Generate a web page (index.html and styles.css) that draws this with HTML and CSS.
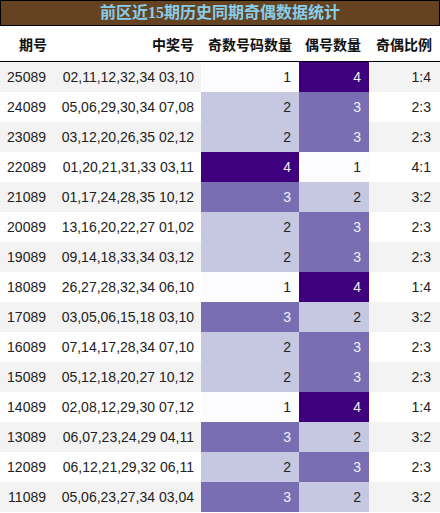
FILE: index.html
```html
<!DOCTYPE html>
<html>
<head>
<meta charset="utf-8">
<link rel="stylesheet" href="styles.css">
</head>
<body>
<div class="title">前区近15期历史同期奇偶数据统计</div>
<table class="stats">
  <colgroup>
    <col class="w0"><col class="w1"><col class="w2"><col class="w3"><col class="w4">
  </colgroup>
  <thead>
    <tr>
      <th class="c0">期号</th>
      <th class="c1">中奖号</th>
      <th class="c2">奇数号码数量</th>
      <th class="c3">偶号数量</th>
      <th class="c4">奇偶比例</th>
    </tr>
  </thead>
  <tbody>
    <tr><td class="c0">25089</td><td class="c1">02,11,12,32,34 03,10</td><td class="c2 v1">1</td><td class="c3 v4">4</td><td class="c4">1:4</td></tr>
    <tr><td class="c0">24089</td><td class="c1">05,06,29,30,34 07,08</td><td class="c2 v2">2</td><td class="c3 v3">3</td><td class="c4">2:3</td></tr>
    <tr><td class="c0">23089</td><td class="c1">03,12,20,26,35 02,12</td><td class="c2 v2">2</td><td class="c3 v3">3</td><td class="c4">2:3</td></tr>
    <tr><td class="c0">22089</td><td class="c1">01,20,21,31,33 03,11</td><td class="c2 v4">4</td><td class="c3 v1">1</td><td class="c4">4:1</td></tr>
    <tr><td class="c0">21089</td><td class="c1">01,17,24,28,35 10,12</td><td class="c2 v3">3</td><td class="c3 v2">2</td><td class="c4">3:2</td></tr>
    <tr><td class="c0">20089</td><td class="c1">13,16,20,22,27 01,02</td><td class="c2 v2">2</td><td class="c3 v3">3</td><td class="c4">2:3</td></tr>
    <tr><td class="c0">19089</td><td class="c1">09,14,18,33,34 03,12</td><td class="c2 v2">2</td><td class="c3 v3">3</td><td class="c4">2:3</td></tr>
    <tr><td class="c0">18089</td><td class="c1">26,27,28,32,34 06,10</td><td class="c2 v1">1</td><td class="c3 v4">4</td><td class="c4">1:4</td></tr>
    <tr><td class="c0">17089</td><td class="c1">03,05,06,15,18 03,10</td><td class="c2 v3">3</td><td class="c3 v2">2</td><td class="c4">3:2</td></tr>
    <tr><td class="c0">16089</td><td class="c1">07,14,17,28,34 07,10</td><td class="c2 v2">2</td><td class="c3 v3">3</td><td class="c4">2:3</td></tr>
    <tr><td class="c0">15089</td><td class="c1">05,12,18,20,27 10,12</td><td class="c2 v2">2</td><td class="c3 v3">3</td><td class="c4">2:3</td></tr>
    <tr><td class="c0">14089</td><td class="c1">02,08,12,29,30 07,12</td><td class="c2 v1">1</td><td class="c3 v4">4</td><td class="c4">1:4</td></tr>
    <tr><td class="c0">13089</td><td class="c1">06,07,23,24,29 04,11</td><td class="c2 v3">3</td><td class="c3 v2">2</td><td class="c4">3:2</td></tr>
    <tr><td class="c0">12089</td><td class="c1">06,12,21,29,32 06,11</td><td class="c2 v2">2</td><td class="c3 v3">3</td><td class="c4">2:3</td></tr>
    <tr><td class="c0">11089</td><td class="c1">05,06,23,27,34 03,04</td><td class="c2 v3">3</td><td class="c3 v2">2</td><td class="c4">3:2</td></tr>
  </tbody>
</table>
</body>
</html>
```
FILE: styles.css
```css
html, body {
  margin: 0;
  padding: 0;
  background: #ffffff;
}
body {
  width: 440px;
  height: 513px;
  overflow: hidden;
}
.title {
  box-sizing: border-box;
  height: 26px;
  border: 1px solid #000;
  background: #654321;
  color: #87ceeb;
  font-family: "Liberation Serif", "Noto Sans CJK SC", serif;
  font-weight: bold;
  font-size: 16px;
  line-height: 24px;
  text-align: center;
}
.stats {
  width: 440px;
  border-collapse: collapse;
  border-spacing: 0;
  table-layout: fixed;
  font-family: "Liberation Sans", "Noto Sans CJK SC", sans-serif;
  font-size: 14px;
  color: #222;
}
.w0 { width: 57px; }
.w1 { width: 144px; }
.w2 { width: 98px; }
.w3 { width: 70px; }
.w4 { width: 71px; }
.stats th {
  height: 35px;
  padding: 0;
  font-family: "Noto Sans CJK SC", sans-serif;
  font-weight: bold;
  font-size: 14px;
  color: #111;
  text-align: right;
  border-bottom: 1px solid #000;
  vertical-align: middle;
  white-space: nowrap;
}
.stats td {
  height: 30px;
  padding: 0;
  text-align: right;
  vertical-align: middle;
  white-space: nowrap;
}
.stats tbody tr:nth-child(odd) {
  background: #f3f3f3;
}
.stats tbody tr:nth-child(even) {
  background: #ffffff;
}
.stats td.c0 { padding-right: 11px; }
.stats td.c1 { padding-right: 7px; }
.stats td.c2 { padding-right: 8px; }
.stats td.c3 { padding-right: 8px; }
.stats td.c4 { padding-right: 9px; }
.stats th.c0 { padding-right: 10px; }
.stats th.c1 { padding-right: 7px; }
.stats th.c2 { padding-right: 7px; }
.stats th.c3 { padding-right: 8px; }
.stats th.c4 { padding-right: 8px; }
.v1 { background: #fcfbfd; color: #222; }
.v2 { background: #c6c7e1; color: #222; }
.v3 { background: #796eb2; color: #f1f1f1; }
.v4 { background: #3f007d; color: #f1f1f1; }
```
